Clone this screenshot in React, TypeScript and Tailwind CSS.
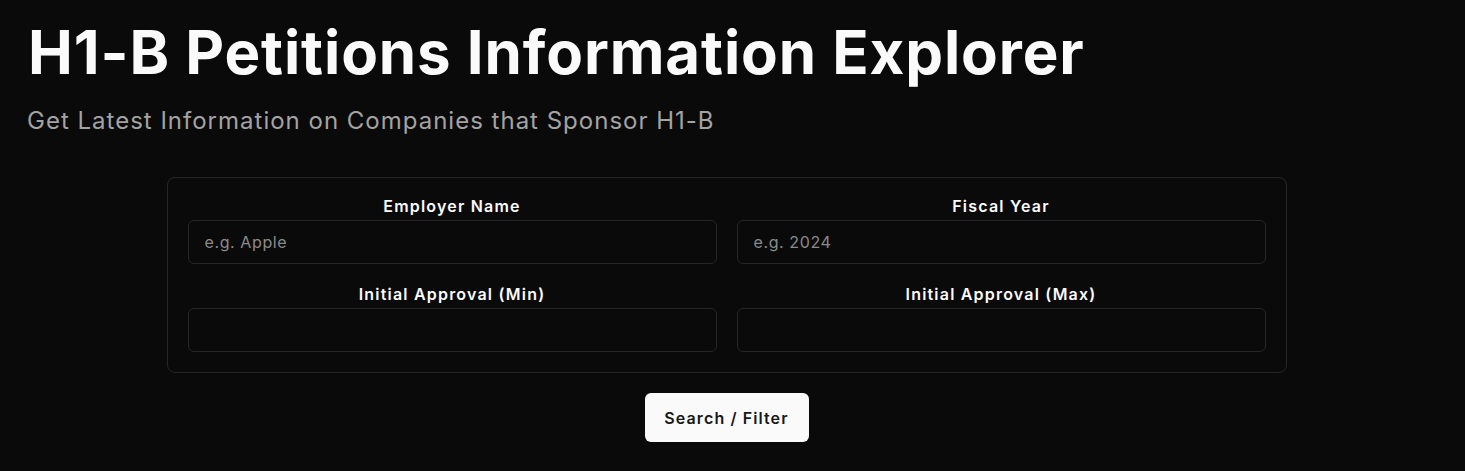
import React from "react";

function Field({ label, placeholder }: { label: string; placeholder?: string }) {
  return (
    <div className="flex flex-col">
      <label className="h-6 text-center text-base leading-6 font-semibold tracking-[1.2px] text-[#fafafa]">{label}</label>
      <input
        className="mt-0.5 h-11 w-full rounded-md border border-[#262626] bg-[#0a0a0a] px-4 text-base tracking-[0.6px] text-[#fafafa] placeholder:text-[#8a8a8a] outline-none"
        placeholder={placeholder}
      />
    </div>
  );
}

export default function App() {
  return (
    <div
      className="min-h-[471px] bg-[#0a0a0a] text-[#fafafa]"
      style={{ fontFamily: "Inter, 'Noto Sans', sans-serif" }}
    >
      <div className="px-7 pt-[22px]">
        <h1 className="text-6xl leading-[60px] font-bold tracking-[0.9px]">H1-B Petitions Information Explorer</h1>
        <p className="mt-[23px] -ml-px text-2xl leading-8 tracking-[1px] text-[#a3a3a3]">Get Latest Information on Companies that Sponsor H1-B</p>
      </div>
      <div className="flex flex-col items-center pr-3 pt-10 pb-7">
        <div className="w-[1120px] rounded-lg border border-[#262626] px-5 pt-4 pb-5">
          <div className="grid grid-cols-2 gap-x-5 gap-y-[18px]">
            <Field label="Employer Name" placeholder="e.g. Apple" />
            <Field label="Fiscal Year" placeholder="e.g. 2024" />
            <Field label="Initial Approval (Min)" />
            <Field label="Initial Approval (Max)" />
          </div>
        </div>
        <button className="mt-5 h-[49px] w-[164px] rounded-md bg-[#fafafa] text-base font-semibold tracking-[1.1px] text-[#171717]">
          Search / Filter
        </button>
      </div>
    </div>
  );
}
